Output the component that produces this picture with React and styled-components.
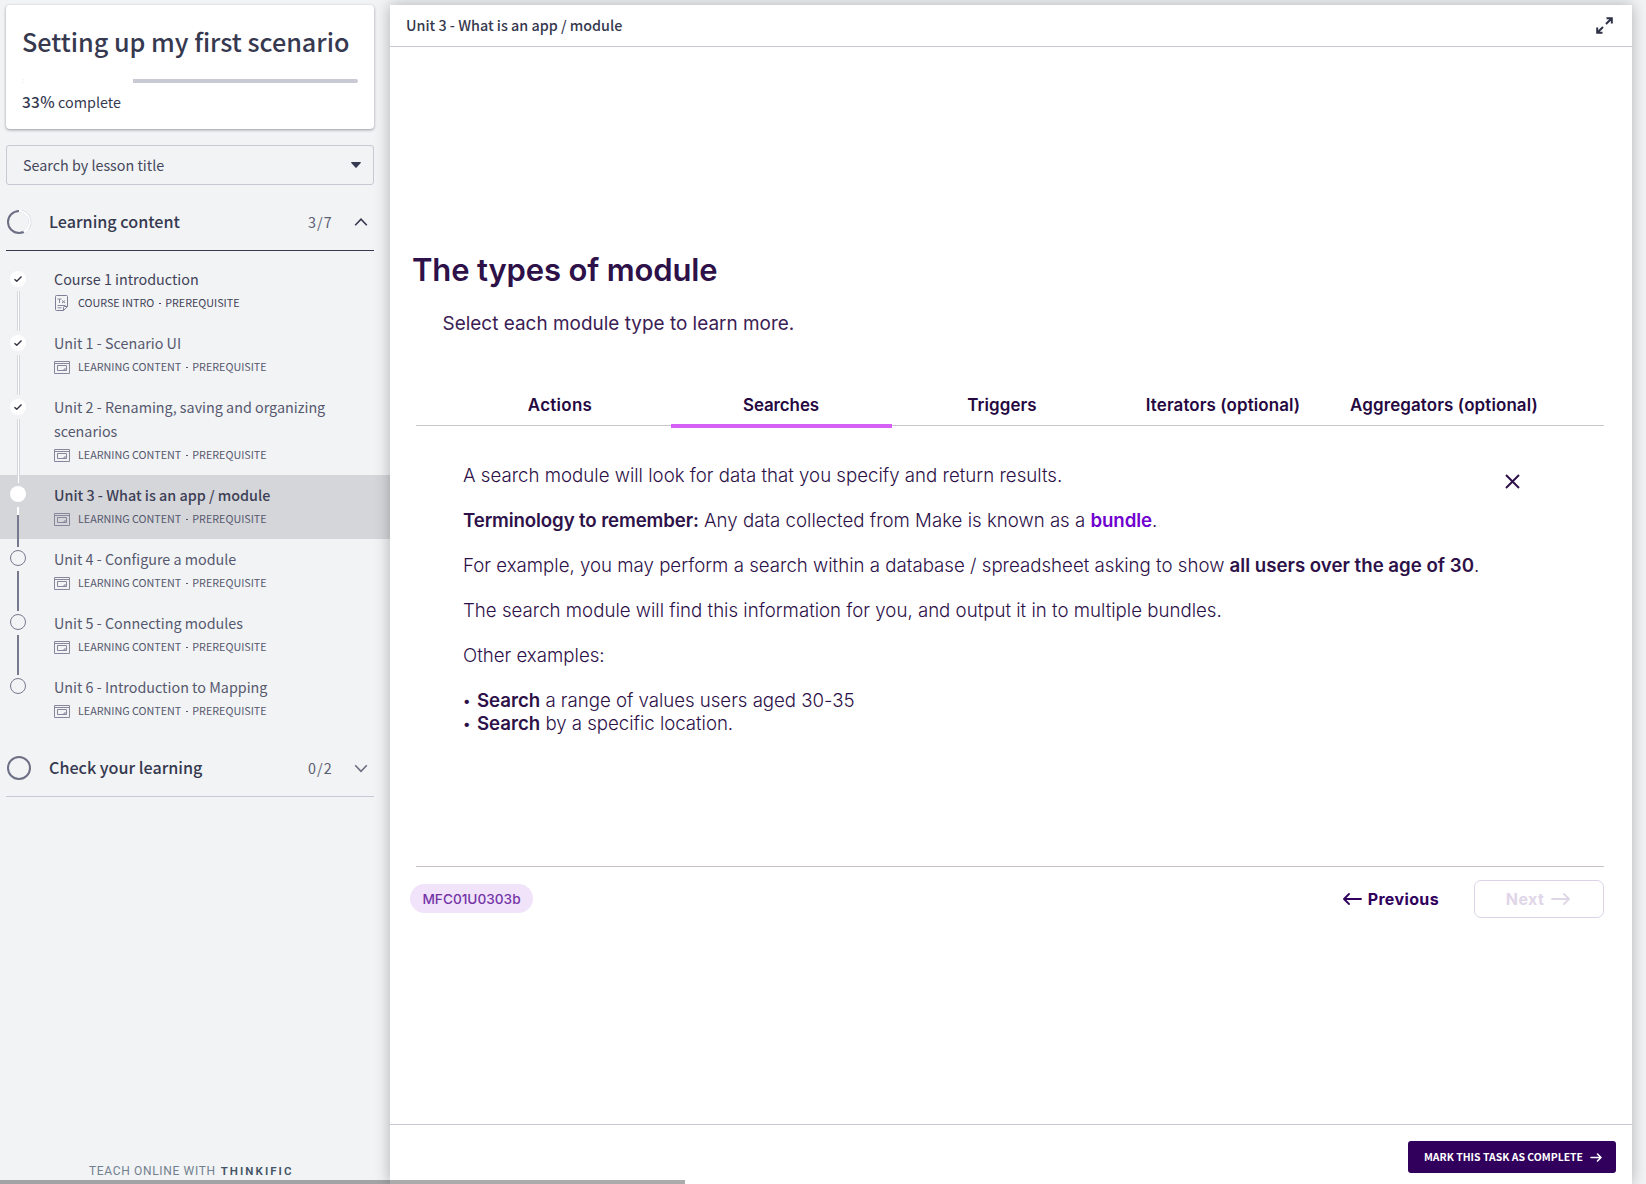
import React from "react";
import styled, { createGlobalStyle, css } from "styled-components";

const sans = `"Noto Sans CJK SC", "Open Sans", sans-serif`;
const inter = `Inter, "Liberation Sans", sans-serif`;

const Global = createGlobalStyle`
  *, *::before, *::after { box-sizing: border-box; }
  html, body, #root { margin: 0; height: 100%; }
  body { background: #f1f3f5; color: #36394f; font-family: ${sans}; overflow: hidden; }
  button { font: inherit; border: 0; background: none; padding: 0; color: inherit; cursor: pointer; }
  svg { display: block; flex: none; }
`;

const Page = styled.div`
  display: flex;
  height: 1184px;
  width: 1646px;
  background: #f1f3f5;
`;

const Sidebar = styled.aside`
  width: 390px;
  flex: none;
  display: flex;
  flex-direction: column;
  padding-top: 5px;
`;

const CourseCard = styled.section`
  margin: 0 16px 0 6px;
  padding: 20px 16px 16px;
  height: 124px;
  border-radius: 4px;
  background: #fff;
  box-shadow: 0 1px 3px rgba(40, 42, 54, 0.45);
`;

const CourseTitle = styled.h1`
  margin: 0;
  font-size: 25.2px;
  line-height: 32px;
  font-weight: 500;
  white-space: nowrap;
`;

const Progress = styled.div`
  height: 4px;
  margin: 22px 0 6px;
  border-radius: 2px;
  background: #c9cad6;
  overflow: hidden;
`;

const ProgressFill = styled.div`
  height: 100%;
  background: #fff;
`;

const ProgressLabel = styled.p`
  margin: 0;
  font-size: 14.34px;
  line-height: 24px;
  b { font-weight: 500; font-size: 15.4px; letter-spacing: 0.3px; }
`;

const LessonSearch = styled.button`
  margin: 16px 16px 0 6px;
  padding: 0 12px 0 16px;
  height: 40px;
  display: flex;
  align-items: center;
  justify-content: space-between;
  border: 1px solid #c7c8d3;
  border-radius: 3px;
  font-size: 14.34px;
  color: #45475c;
  span { padding-bottom: 2px; }
`;

const SectionHead = styled.header`
  margin: 9px 16px 0 6px;
  height: 57px;
  display: flex;
  align-items: center;
  border-bottom: 1px solid ${(p) => (p.$open ? "#36394f" : "#c7c8d9")};
`;

const SectionTitle = styled.h2`
  flex: 1;
  margin: 0 0 0 17px;
  padding-bottom: 2px;
  font-size: 16.15px;
  line-height: 24px;
  font-weight: 500;
`;

const SectionCount = styled.span`
  width: 46px;
  padding-bottom: 2px;
  font-size: 14.34px;
  letter-spacing: 1.1px;
  color: #5b5d73;
`;

const ChevronSlot = styled.span`
  width: 20px;
`;

const Lessons = styled.ul`
  list-style: none;
  margin: 0;
  padding: 8px 0 0;
`;

const Lesson = styled.li`
  display: flex;
  padding-left: 10px;
  background: ${(p) => (p.$active ? "#d5d6da" : "transparent")};
`;

const Track = styled.div`
  position: relative;
  z-index: 1;
  width: 44px;
  display: flex;
  flex-direction: column;
  padding-top: ${(p) => (p.$done ? 12 : 11)}px;
`;

const Dot = styled.span`
  flex: none;
  width: 16px;
  height: 16px;
  border-radius: 50%;
  display: grid;
  place-items: center;
  ${(p) =>
    p.$state === "todo"
      ? css`border: 1px solid #77798d;`
      : css`background: #fff;`}
`;

const Connector = styled.span`
  flex: 1;
  margin: ${(p) => (p.$state === "done" ? 4 : 5)}px 0 -8px 7px;
  ${(p) =>
    p.$state === "done"
      ? css`width: 3px; background: linear-gradient(90deg, #d6d7da 0 1px, #fff 1px 2px, #d6d7da 2px);`
      : p.$state === "current"
        ? css`width: 2px; background: linear-gradient(#fff 0 8px, #77798f 8px);`
        : css`width: 2px; background: #77798f;`}
`;

const LessonBody = styled.div`
  flex: 1;
  padding: 8px 16px 12px 0;
  color: ${(p) => (p.$dark ? "#3f4157" : "#56586e")};
`;

const LessonTitle = styled.div`
  font-size: 14.34px;
  line-height: 24px;
  font-weight: ${(p) => (p.$active ? 500 : 400)};
  color: ${(p) => (p.$active ? "#3d3f56" : "inherit")};
`;

const LessonMeta = styled.div`
  display: flex;
  align-items: center;
  margin-top: 4px;
  height: 16px;
  font-size: 10.75px;
  line-height: 16px;
`;

const MetaIcon = styled.span`
  width: 24px;
`;

const MetaDot = styled.span`
  width: 2px;
  height: 1px;
  margin: 1px 4.5px 0 4.5px;
  background: currentColor;
`;

const Brand = styled.footer`
  margin: auto 0 5px 89px;
  display: flex;
  gap: 5px;
  font: 400 12px/16px Roboto, sans-serif;
  letter-spacing: 0.66px;
  color: #71808e;
  b { font-weight: 600; letter-spacing: 2.05px; color: #425465; font-size: 11.5px; }
`;

const Panel = styled.main`
  flex: none;
  width: 1242px;
  margin-top: 5px;
  display: flex;
  flex-direction: column;
  background: #fff;
  box-shadow: 0 0 14px rgba(0, 0, 0, 0.28);
`;

const PanelHead = styled.header`
  flex: none;
  height: 42px;
  padding: 0 19px 0 16px;
  display: flex;
  align-items: center;
  justify-content: space-between;
  border-bottom: 1px solid #c7c8d3;
  font-size: 14.34px;
  font-weight: 500;
  span { padding-bottom: 2px; }
`;

const Content = styled.section`
  flex: 1;
  padding: 203px 28px 0 26px;
  font-family: ${inter};
  color: #2d1148;
`;

const Heading = styled.h2`
  margin: 0 0 0 -4px;
  font-size: 31px;
  line-height: 40px;
  font-weight: 600;
  letter-spacing: -0.15px;
`;

const Lead = styled.p`
  margin: 22px 0 0 26.5px;
  font-size: 18.9px;
  line-height: 24px;
  letter-spacing: 0.03px;
  color: #3a2054;
`;

const Tabs = styled.nav`
  margin-top: 57px;
  padding-left: 34px;
  height: 33px;
  display: flex;
  border-bottom: 1px solid #c9c5cb;
`;

const Tab = styled.button`
  position: relative;
  width: 221px;
  padding: 0 1px 8px 0;
  font-size: 16.95px;
  line-height: 24px;
  font-weight: 600;
  letter-spacing: ${(p) => p.$track || 0}px;
  white-space: nowrap;
  color: #25083f;
  ${(p) =>
    p.$active &&
    css`
      &::after {
        content: "";
        position: absolute;
        left: 0;
        right: 0;
        bottom: -3px;
        height: 4px;
        background: #d560f5;
      }
    `}
`;

const Pane = styled.div`
  height: 441px;
  padding: 39px 84px 0 47px;
  display: flex;
  justify-content: space-between;
  border-bottom: 1px solid #cbc1c3;
`;

const Copy = styled.div`
  font-size: 18.66px;
  line-height: 22.5px;
  font-weight: 300;
  white-space: nowrap;
  p { margin: 0 0 22.5px; }
  b { font-weight: 600; }
`;

const Term = styled.b`
  letter-spacing: -0.12px;
`;

const Accent = styled.b`
  color: #6f00cf;
  letter-spacing: -0.1px;
`;

const Bullets = styled.ul`
  list-style: none;
  margin: -1px 0 0;
  padding: 0;
  line-height: 23px;
  letter-spacing: -0.03px;
`;

const Bullet = styled.li`
  display: flex;
  gap: 5px;
  &::before { content: "•"; font-size: 14px; font-weight: 500; width: 9px; }
`;

const CloseButton = styled.button`
  height: 15px;
  margin-top: 9px;
`;

const PaneFoot = styled.div`
  margin: 13px 0 0 -6px;
  height: 38px;
  display: flex;
  align-items: center;
`;

const CodeChip = styled.span`
  height: 29px;
  width: 123px;
  margin: 0 auto 1px 0;
  display: grid;
  place-items: center;
  border-radius: 15px;
  background: #f0e3fa;
  color: #7434a6;
  font-size: 13.65px;
  font-weight: 500;
`;

const NavButton = styled.button`
  display: flex;
  align-items: center;
  gap: 6px;
  font-size: 16px;
  font-weight: 700;
  letter-spacing: 0.37px;
  color: #30005c;
  ${(p) =>
    p.$outlined &&
    css`
      margin-left: 35px;
      padding-right: 2px;
      width: 130px;
      height: 38px;
      justify-content: center;
      gap: 7px;
      border: 1px solid #dcd3e6;
      border-radius: 7px;
      color: #dfd6e8;
    `}
`;

const PanelFoot = styled.footer`
  flex: none;
  height: 60px;
  padding: 16px 16px 0;
  display: flex;
  justify-content: flex-end;
  align-items: flex-start;
  border-top: 1px solid #c7c8d3;
`;

const CompleteButton = styled.button`
  width: 208px;
  height: 32px;
  padding-left: 2px;
  display: flex;
  align-items: center;
  justify-content: center;
  gap: 7px;
  border-radius: 3px;
  background: #30005c;
  color: #fff;
  font-size: 10.45px;
  font-weight: 700;
  white-space: nowrap;
  span { padding-bottom: 2px; }
`;

const ScrollThumb = styled.div`
  position: fixed;
  left: 0;
  bottom: 0;
  width: 685px;
  height: 4px;
  background: rgba(0, 0, 0, 0.33);
  z-index: 5;
`;

const Check = () => (
  <svg width="8" height="6" viewBox="0 0 8 6" fill="none" stroke="#2c2e3d" strokeWidth="1.4">
    <path d="M.5 3.2 2.8 5.2 7.5.6" />
  </svg>
);

const Caret = () => (
  <svg width="10" height="6" viewBox="0 0 10 6" fill="#36394f">
    <path d="M.8 0h8.4c.7 0 1 .6.5 1.1L5.6 5.6c-.3.4-.9.4-1.2 0L.3 1.1C-.2.6.1 0 .8 0Z" />
  </svg>
);

const Chevron = ({ up }) => (
  <svg width="14" height="9" viewBox="0 0 14 9" fill="none" stroke={up ? "#36394f" : "#6b6d83"} strokeWidth="1.6">
    <path d={up ? "M1.2 7.2 7 1.2 12.8 7.2" : "M1.2 1.3 7 7.3 12.8 1.3"} />
  </svg>
);

const Ring = ({ progress }) => (
  <svg width="26" height="26" viewBox="0 0 26 26" fill="none" strokeWidth="2">
    <circle cx="13" cy="13" r="11" stroke="#6d6f84" />
    {progress && (
      <>
        <path d="M13 2a11 11 0 0 1 4.8 20.9" stroke="#f1f3f5" strokeWidth="2.6" />
        <path d="M13 2a11 11 0 0 1 4.8 20.9" stroke="#fff" />
        <path d="M16 1.4a12 12 0 0 1 6.5 19" stroke="#cfd0d8" strokeWidth=".5" />
      </>
    )}
  </svg>
);

const ContentIcon = () => (
  <svg width="16" height="13" viewBox="0 0 16 13" fill="none" stroke="#85879a">
    <path d="M.5.5h15v12H.5zM.5 2.500h15M3.500 4.500h9v5h-9zM12.500 8h-2.500v1.500" />
  </svg>
);

const TextIcon = () => (
  <svg width="16" height="16" viewBox="0 0 16 16" fill="none" stroke="#7d7f94">
    <path d="M1.5 1.500q0-1 1-1h10q1 0 1 1v10l-4 4h-7q-1 0-1-1zM13.500 11.500h-3q-1 0-1 1v3" />
    <path d="M3.500 4h4M5.500 4v4M8 5.500l3 2.500M11 5.500l-3 2.500M3.500 10.500h8M3.500 12.800h4" strokeWidth=".9" />
  </svg>
);

const Expand = () => (
  <svg width="17" height="17" viewBox="0 0 17 17" fill="none" stroke="#2f3147" strokeWidth="2">
    <path d="M10.500 1.200h5.300v5.300M15.500 1.500 10 7M1.200 10.500v5.300h5.300M1.500 15.500l5.500-5.500" />
  </svg>
);

const Cross = () => (
  <svg width="15" height="15" viewBox="0 0 15 15" fill="none" stroke="#2d1148" strokeWidth="2">
    <path d="m1 1 13 13M14 1 1 14" />
  </svg>
);

const Arrow = ({ left, width = 19, height = 12, weight = 1.8 }) => (
  <svg width={width} height={height} viewBox={`0 0 ${width} ${height}`} fill="none" stroke="currentColor" strokeWidth={weight} strokeLinejoin="round" strokeLinecap="round">
    {left ? (
      <path d={`M${width - 1} ${height / 2}H1M${height / 2} 1 1 ${height / 2}l${height / 2 - 1} ${height / 2 - 1}`} />
    ) : (
      <path d={`M1 ${height / 2}h${width - 2}M${width - height / 2} 1l${height / 2 - 1} ${height / 2 - 1}-${height / 2 - 1} ${height / 2 - 1}`} />
    )}
  </svg>
);

const lessons = [
  { title: "Course 1 introduction", kind: "COURSE INTRO", state: "done", intro: true },
  { title: "Unit 1 - Scenario UI", state: "done" },
  { title: "Unit 2 - Renaming, saving and organizing scenarios", state: "done" },
  { title: "Unit 3 - What is an app / module", state: "current" },
  { title: "Unit 4 - Configure a module", state: "todo" },
  { title: "Unit 5 - Connecting modules", state: "todo" },
  { title: "Unit 6 - Introduction to Mapping", state: "todo" },
];

const tabs = [
  { label: "Actions", track: 0.3 },
  { label: "Searches", active: true, track: -0.1 },
  { label: "Triggers", track: 0.1 },
  { label: "Iterators (optional)", track: 0.1 },
  { label: "Aggregators (optional)", track: 0.12 },
];

const Section = ({ title, count, open }) => (
  <SectionHead $open={open}>
    <Ring progress={open} />
    <SectionTitle>{title}</SectionTitle>
    <SectionCount>{count}</SectionCount>
    <ChevronSlot><Chevron up={open} /></ChevronSlot>
  </SectionHead>
);

export default function App() {
  return (
    <Page>
      <Global />
      <Sidebar>
        <CourseCard>
          <CourseTitle>Setting up my first scenario</CourseTitle>
          <Progress><ProgressFill style={{ width: "33%" }} /></Progress>
          <ProgressLabel><b>33%</b> complete</ProgressLabel>
        </CourseCard>
        <LessonSearch><span>Search by lesson title</span><Caret /></LessonSearch>
        <Section title="Learning content" count="3/7" open />
        <Lessons>
          {lessons.map((l, i) => (
            <Lesson key={l.title} $active={l.state === "current"}>
              <Track $done={l.state === "done"}>
                <Dot $state={l.state}>{l.state === "done" && <Check />}</Dot>
                {i < lessons.length - 1 && <Connector $state={l.state} />}
              </Track>
              <LessonBody $dark={l.intro}>
                <LessonTitle $active={l.state === "current"}>{l.title}</LessonTitle>
                <LessonMeta>
                  <MetaIcon>{l.intro ? <TextIcon /> : <ContentIcon />}</MetaIcon>
                  <span>{l.kind || "LEARNING CONTENT"}</span>
                  <MetaDot />
                  <span>PREREQUISITE</span>
                </LessonMeta>
              </LessonBody>
            </Lesson>
          ))}
        </Lessons>
        <Section title="Check your learning" count="0/2" />
        <Brand><span>TEACH ONLINE WITH</span><b>THINKIFIC</b></Brand>
      </Sidebar>

      <Panel>
        <PanelHead><span>Unit 3 - What is an app / module</span><Expand /></PanelHead>
        <Content>
          <Heading>The types of module</Heading>
          <Lead>Select each module type to learn more.</Lead>
          <Tabs>
            {tabs.map((t) => (
              <Tab key={t.label} $active={t.active} $track={t.track}>{t.label}</Tab>
            ))}
          </Tabs>
          <Pane>
            <Copy>
              <p>A search module will look for data that you specify and return results.</p>
              <p><Term>Terminology to remember:</Term> Any data collected from Make is known as a <Accent>bundle</Accent>.</p>
              <p>For example, you may perform a search within a database / spreadsheet asking to show <b>all users over the age of 30</b>.</p>
              <p>The search module will find this information for you, and output it in to multiple bundles.</p>
              <p>Other examples:</p>
              <Bullets>
                <Bullet><span><b>Search</b> a range of values users aged 30-35</span></Bullet>
                <Bullet><span><b>Search</b> by a specific location.</span></Bullet>
              </Bullets>
            </Copy>
            <CloseButton aria-label="Close"><Cross /></CloseButton>
          </Pane>
          <PaneFoot>
            <CodeChip>MFC01U0303b</CodeChip>
            <NavButton><Arrow left />Previous</NavButton>
            <NavButton $outlined>Next<Arrow /></NavButton>
          </PaneFoot>
        </Content>
        <PanelFoot>
          <CompleteButton><span>MARK THIS TASK AS COMPLETE</span><Arrow width={12} height={9} weight={1.6} /></CompleteButton>
        </PanelFoot>
      </Panel>
      <ScrollThumb />
    </Page>
  );
}
